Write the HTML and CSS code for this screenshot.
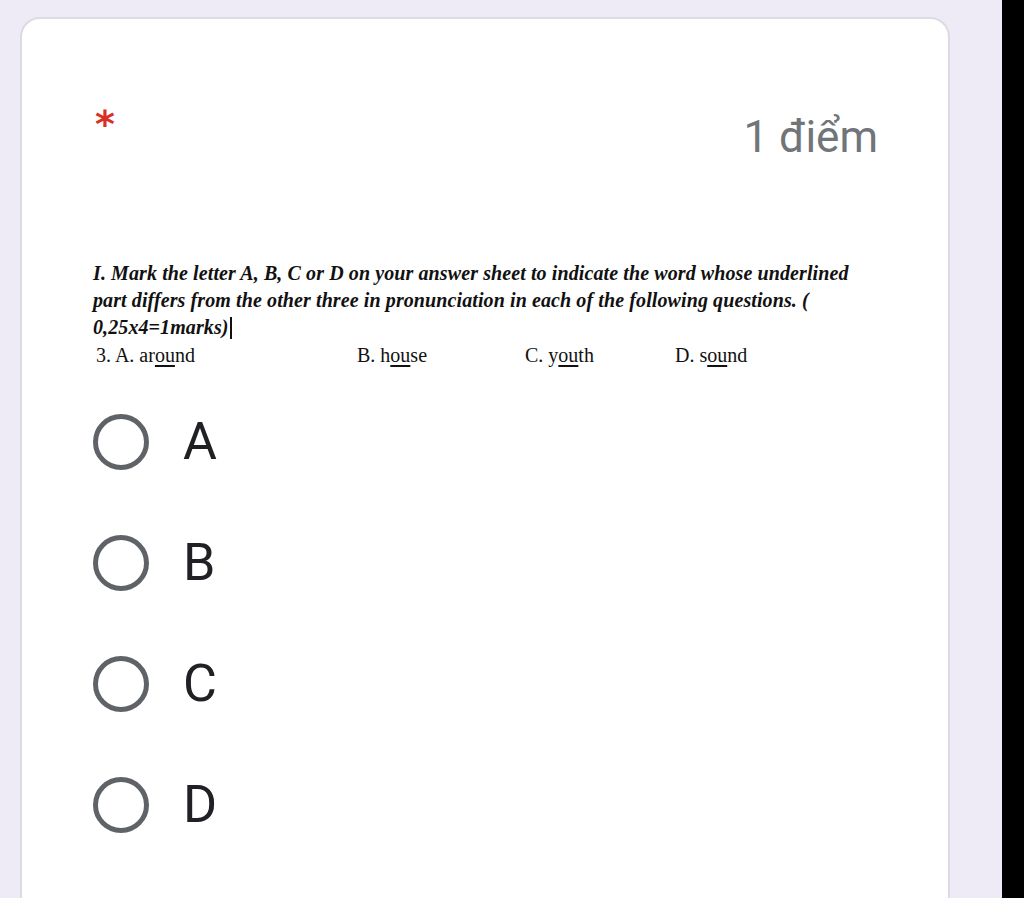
FILE: index.html
```html
<!DOCTYPE html>
<html lang="vi">
<head>
  <meta charset="UTF-8">
  <meta name="viewport" content="width=device-width, initial-scale=1.0">
  <title>Câu hỏi</title>
  <link rel="stylesheet" href="styles.css">
</head>
<body>
  <div class="page">
    <div class="card">
      <div class="card-head">
        <span class="required">*</span>
        <span class="points">1 điểm</span>
      </div>

      <div class="question">
        <p class="instr">I. Mark the letter A, B, C or D on your answer sheet to indicate the word whose underlined<br>part differs from the other three in pronunciation in each of the following questions. (<br>0,25x4=1marks)<span class="caret"></span></p>
        <div class="choices">
          <span>3. A. ar<u>ou</u>nd</span>
          <span>B. h<u>ou</u>se</span>
          <span>C. y<u>ou</u>th</span>
          <span>D. s<u>ou</u>nd</span>
        </div>
      </div>

      <div class="options">
        <label class="option"><span class="radio"></span><span class="opt-text">A</span></label>
        <label class="option"><span class="radio"></span><span class="opt-text">B</span></label>
        <label class="option"><span class="radio"></span><span class="opt-text">C</span></label>
        <label class="option"><span class="radio"></span><span class="opt-text">D</span></label>
      </div>
    </div>
  </div>
  <div class="edge"></div>
</body>
</html>
```

FILE: styles.css
```css
body { margin: 0; display: flex; height: 898px; overflow: hidden; background: #eeeaf6; font-family: Roboto, "Noto Sans", sans-serif; }
.page { flex: 1; padding: 17px 0 0 20px; }
.edge { width: 22px; background: #000; }
.card { width: 930px; height: 900px; background: #fff; border: 2px solid #dcdbe2; border-radius: 20px; box-sizing: border-box; padding: 0 70px 0 71px; }
.card-head { display: flex; justify-content: space-between; align-items: flex-start; padding-top: 86px; height: 148px; box-sizing: border-box; }
.required { color: #d93025; font-size: 38px; line-height: 1; font-family: "DejaVu Sans", sans-serif; font-weight: bold; margin-left: 2px; }
.points { color: #70757a; font-size: 44px; line-height: 1; margin-top: 10px; }
.question { padding-top: 93px; font-family: "Liberation Serif", serif; color: #111; }
.instr { margin: 0; font-size: 20px; font-weight: bold; font-style: italic; line-height: 27px; letter-spacing: 0.1px; }
.caret { display: inline-block; width: 2px; height: 22px; background: #111; vertical-align: -5px; margin-left: 1px; }
.choices { display: grid; grid-template-columns: 261px 168px 150px auto; font-size: 20px; line-height: 28px; padding-left: 3px; }
.choices u { text-underline-offset: 3px; }
.options { padding-top: 12px; }
.option { display: flex; align-items: center; height: 121px; }
.radio { width: 46px; height: 46px; border: 5px solid #5f6368; border-radius: 50%; margin-right: 34px; }
.opt-text { font-size: 52px; color: #202124; }
```
